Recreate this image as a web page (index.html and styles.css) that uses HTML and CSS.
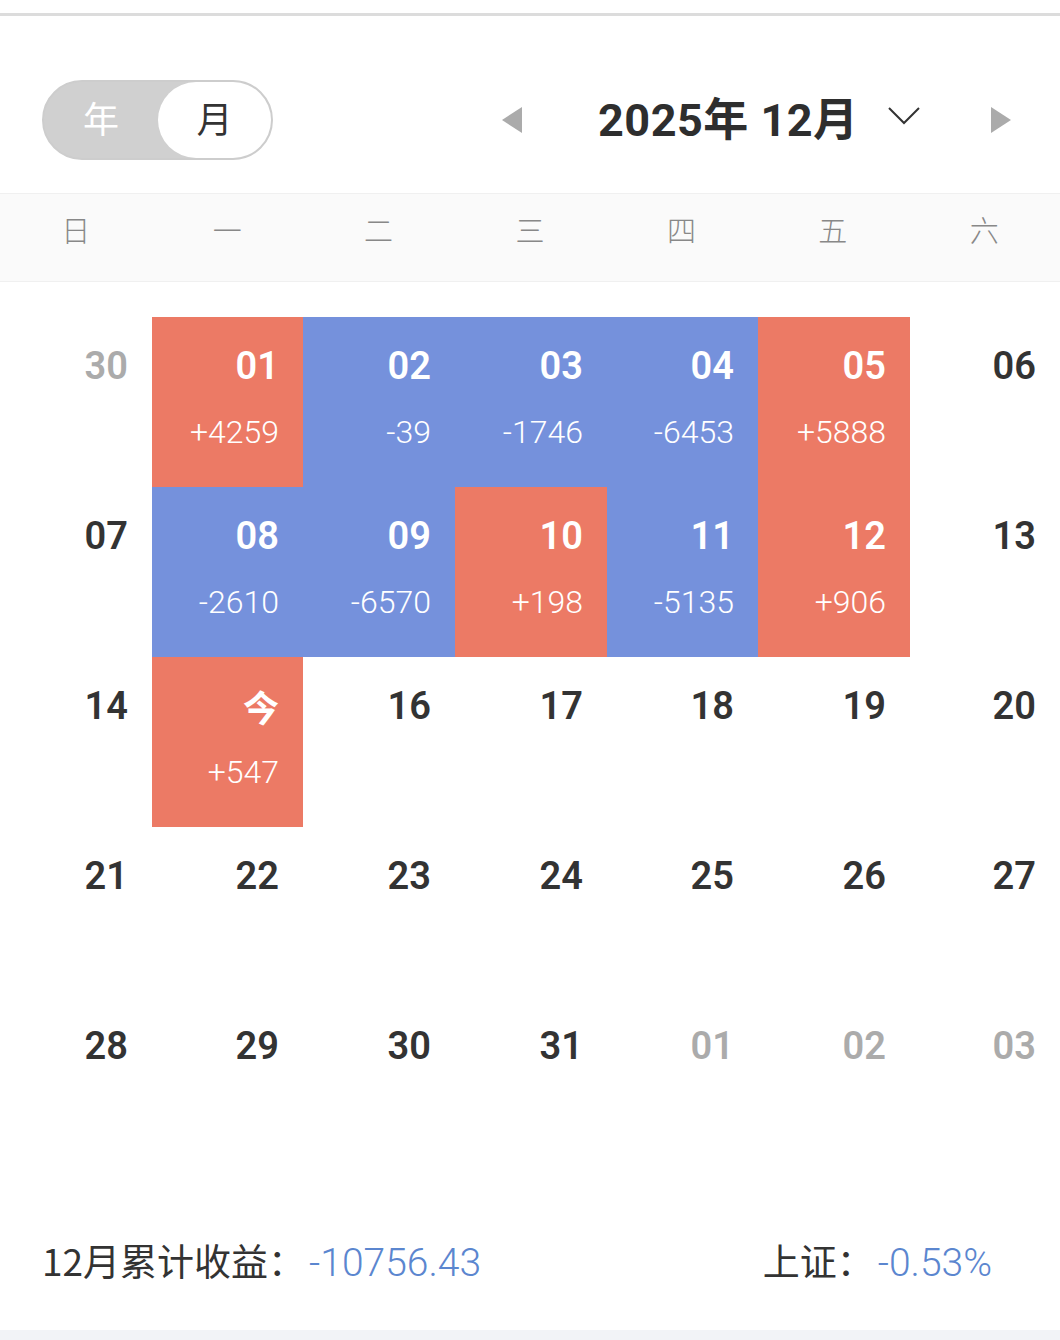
FILE: index.html
```html
<!DOCTYPE html>
<html lang="zh-CN">
<head>
<meta charset="utf-8">
<title>收益日历</title>
<link rel="stylesheet" href="styles.css">
</head>
<body>
<div class="page">
  <div class="topbar"></div>
  <div class="header">
    <div class="toggle">
      <span class="opt opt-year">年</span>
      <span class="opt opt-month">月</span>
    </div>
    <div class="nav">
      <svg class="arrow prev" width="20" height="26" viewBox="0 0 20 26"><polygon points="20,0 20,26 0,13" fill="#ababab"/></svg>
      <div class="title">2025年 12月</div>
      <svg class="chev" width="32" height="18" viewBox="0 0 32 18"><polyline points="1,1 16,16 31,1" fill="none" stroke="#333" stroke-width="2"/></svg>
      <svg class="arrow next" width="20" height="26" viewBox="0 0 20 26"><polygon points="0,0 0,26 20,13" fill="#ababab"/></svg>
    </div>
  </div>
  <div class="weekdays">
    <span>日</span><span>一</span><span>二</span><span>三</span><span>四</span><span>五</span><span>六</span>
  </div>
  <div class="grid">
    <div class="cell muted"><div class="num">30</div></div>
    <div class="cell up"><div class="num">01</div><div class="val">+4259</div></div>
    <div class="cell down"><div class="num">02</div><div class="val">-39</div></div>
    <div class="cell down"><div class="num">03</div><div class="val">-1746</div></div>
    <div class="cell down"><div class="num">04</div><div class="val">-6453</div></div>
    <div class="cell up"><div class="num">05</div><div class="val">+5888</div></div>
    <div class="cell"><div class="num">06</div></div>

    <div class="cell"><div class="num">07</div></div>
    <div class="cell down"><div class="num">08</div><div class="val">-2610</div></div>
    <div class="cell down"><div class="num">09</div><div class="val">-6570</div></div>
    <div class="cell up"><div class="num">10</div><div class="val">+198</div></div>
    <div class="cell down"><div class="num">11</div><div class="val">-5135</div></div>
    <div class="cell up"><div class="num">12</div><div class="val">+906</div></div>
    <div class="cell"><div class="num">13</div></div>

    <div class="cell"><div class="num">14</div></div>
    <div class="cell up"><div class="num today">今</div><div class="val">+547</div></div>
    <div class="cell"><div class="num">16</div></div>
    <div class="cell"><div class="num">17</div></div>
    <div class="cell"><div class="num">18</div></div>
    <div class="cell"><div class="num">19</div></div>
    <div class="cell"><div class="num">20</div></div>

    <div class="cell"><div class="num">21</div></div>
    <div class="cell"><div class="num">22</div></div>
    <div class="cell"><div class="num">23</div></div>
    <div class="cell"><div class="num">24</div></div>
    <div class="cell"><div class="num">25</div></div>
    <div class="cell"><div class="num">26</div></div>
    <div class="cell"><div class="num">27</div></div>

    <div class="cell"><div class="num">28</div></div>
    <div class="cell"><div class="num">29</div></div>
    <div class="cell"><div class="num">30</div></div>
    <div class="cell"><div class="num">31</div></div>
    <div class="cell muted"><div class="num">01</div></div>
    <div class="cell muted"><div class="num">02</div></div>
    <div class="cell muted"><div class="num">03</div></div>
  </div>
  <div class="footer">
    <div class="stat"><span class="label">12月累计收益：</span><span class="value">-10756.43</span></div>
    <div class="stat"><span class="label">上证：</span><span class="value">-0.53%</span></div>
  </div>
  <div class="bottombar"></div>
</div>
</body>
</html>
```

FILE: styles.css
```css
* { box-sizing: border-box; }
html, body { margin: 0; padding: 0; background: #fff; }
body {
  font-family: Roboto, "Noto Sans CJK SC", "Noto Sans", sans-serif;
  color: #333;
}
.page { width: 1060px; height: 1340px; display: flex; flex-direction: column; }
.topbar { height: 16px; border-bottom: 3px solid #dcdcdc; flex: none; }

.header {
  height: 177px;
  display: flex;
  align-items: flex-start;
  padding-top: 64px;
  padding-left: 42px;
  flex: none;
}
.toggle {
  width: 231px;
  height: 80px;
  border-radius: 40px;
  background: #d0d0d0;
  border: 2px solid #cdcdcd;
  display: flex;
  align-items: stretch;
  font-family: "Noto Sans CJK SC", sans-serif;
  font-size: 36px;
}
.opt { display: flex; align-items: center; justify-content: center; padding-bottom: 7px; }
.opt-year { width: 114px; color: #fff; }
.opt-month {
  flex: 1;
  background: #fff;
  border-radius: 38px;
  color: #333;
}
.nav {
  display: flex;
  align-items: center;
  height: 76px;
  margin-left: 229px;
}
.arrow { flex: none; }
.arrow.prev { margin-top: 4px; }
.title {
  margin-left: 76px;
  font-size: 45px;
  font-weight: 700;
  color: #2e2e2e;
  font-family: Roboto, "Noto Sans CJK SC", sans-serif;
  white-space: nowrap;
  letter-spacing: 0.5px;
  padding-bottom: 4px;
}
.chev { margin-left: 29px; margin-top: -4px; }
.arrow.next { margin-left: 71px; margin-top: 4px; }

.weekdays {
  height: 89px;
  flex: none;
  background: #fafafa;
  border-top: 1px solid #f0f0f0;
  border-bottom: 1px solid #f0f0f0;
  display: grid;
  grid-template-columns: repeat(7, 1fr);
  align-items: start;
  justify-items: center;
  padding-top: 13px;
  font-family: "Noto Sans CJK SC", sans-serif;
  font-size: 29px;
  font-weight: 300;
  line-height: 44px;
  color: #888;
}

.grid {
  margin-top: 35px;
  display: grid;
  grid-template-columns: 152px 151px 152px 152px 151px 152px 150px;
  grid-auto-rows: 170px;
  flex: none;
}
.cell {
  display: flex;
  flex-direction: column;
  align-items: flex-end;
  padding: 25px 24px 0 0;
}
.cell .num {
  font-size: 38px;
  font-weight: 600;
  line-height: 48px;
  color: #333;
}
.cell .num.today { font-family: "Noto Sans CJK SC", sans-serif; font-size: 36px; font-weight: 700; }
.cell .val {
  margin-top: 22px;
  font-size: 32px;
  font-weight: 300;
  line-height: 40px;
  color: #fff;
}
.cell.muted .num { color: #ababab; }
.cell.up { background: #ec7a65; }
.cell.down { background: #7591dc; }
.cell.up .num, .cell.down .num { color: #fff; }

.footer {
  flex: 1;
  display: flex;
  align-items: center;
  justify-content: space-between;
  padding: 22px 68px 0 42px;
}
.stat { font-size: 37px; white-space: nowrap; }
.label { font-family: "Noto Sans CJK SC", sans-serif; color: #333; }
.value { color: #5b86cf; font-family: Roboto, sans-serif; font-size: 39px; font-weight: 300; margin-left: 4px; }
.bottombar { height: 10px; background: #f2f3f7; flex: none; }
```
